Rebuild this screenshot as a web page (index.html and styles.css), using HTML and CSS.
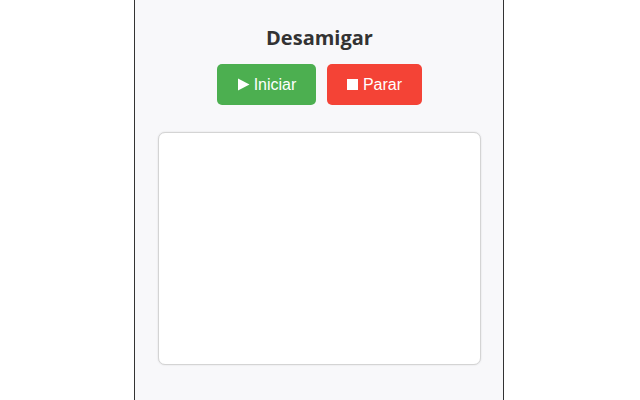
FILE: index.html
```html
<!DOCTYPE html>
<html lang="pt">
<head>
<meta charset="utf-8">
<title>Desamigar</title>
<link rel="stylesheet" href="styles.css">
</head>
<body>
<div class="panel">
  <h1 class="title">Desamigar</h1>
  <div class="actions">
    <button class="btn btn-start"><svg class="ico" width="13" height="13" viewBox="0 0 13 13"><path d="M1 0.5 L12.5 6.5 L1 12.5 Z" fill="#fff"/></svg>Iniciar</button>
    <button class="btn btn-stop"><span class="sq"></span>Parar</button>
  </div>
  <div class="log"></div>
</div>
</body>
</html>
```
FILE: styles.css
```css
html, body {
  margin: 0;
  height: 100%;
  background: #ffffff;
}
body {
  display: flex;
  justify-content: center;
  padding-right: 2px;
  box-sizing: border-box;
}
.panel {
  box-sizing: border-box;
  width: 370px;
  height: 400px;
  background: #f8f8fa;
  border-left: 1px solid #333;
  border-right: 1px solid #333;
  padding: 26px 22px 0 23px;
  display: flex;
  flex-direction: column;
  align-items: center;
}
.title {
  margin: 0;
  font-family: "Open Sans", sans-serif;
  font-weight: 700;
  font-size: 20px;
  line-height: 24px;
  color: #333;
}
.actions {
  display: flex;
  gap: 11px;
  margin-top: 14px;
}
.btn {
  display: flex;
  align-items: center;
  justify-content: center;
  height: 41px;
  border: none;
  border-radius: 5px;
  color: #fff;
  font-family: "Liberation Sans", Arial, sans-serif;
  font-size: 16px;
  padding: 0;
}
.btn-start { background: #4caf50; width: 99px; }
.btn-stop { background: #f44336; width: 95px; }
.ico {
  margin-right: 4px;
}
.sq {
  width: 11px;
  height: 11px;
  background: #fff;
  margin-right: 5px;
}
.log {
  box-sizing: border-box;
  margin-top: 27px;
  width: 323px;
  height: 233px;
  background: #fff;
  border: 1px solid #d4d4d4;
  border-radius: 7px;
  box-shadow: 0 0 2px rgba(0, 0, 0, 0.12);
}
```
